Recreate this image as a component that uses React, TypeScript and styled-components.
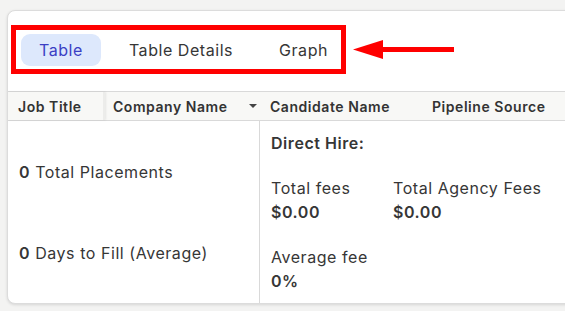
import React from 'react';
import styled, { createGlobalStyle } from 'styled-components';

const GlobalStyle = createGlobalStyle`
    html, body {
        margin: 0;
        padding: 0;
        background: #f3f3f2;
        overflow: hidden;
    }
    body {
        font-family: Inter, "Noto Sans", "Liberation Sans", sans-serif;
        color: #363636;
        letter-spacing: 0.55px;
    }
`;

const Page = styled.div`
    width: 565px;
    height: 311px;
    padding: 10px 0 0 7px;
    box-sizing: border-box;
    position: relative;
`;

const Card = styled.div`
    width: 620px;
    height: 294px;
    box-sizing: border-box;
    background: #ffffff;
    border: 1px solid #dcdcdc;
    border-radius: 8px;
    box-shadow: 0 1px 3px rgba(0, 0, 0, 0.12);
    display: flex;
    flex-direction: column;
    overflow: hidden;
`;

const TabBar = styled.div`
    padding: 14px 0 0 3px;
    height: 80px;
    box-sizing: border-box;
`;

const Highlight = styled.div`
    display: inline-flex;
    align-items: center;
    gap: 10px;
    border: 5px solid #ff0000;
    padding: 4px 0 3px 5px;
`;

const Tab = styled.div<{ $active?: boolean }>`
    height: 32px;
    padding: 0 18px;
    display: flex;
    align-items: center;
    border-radius: 9px;
    font-size: 16px;
    color: ${(p) => (p.$active ? '#3b3fc4' : '#363636')};
    background: ${(p) => (p.$active ? '#dde8fc' : 'transparent')};
    &:last-child {
        padding-right: 13px;
    }
`;

const Arrow = styled.svg`
    position: absolute;
    left: 352px;
    top: 39px;
`;

const HeaderRow = styled.div`
    display: flex;
    height: 30px;
    border-top: 1px solid #d9d9d9;
    border-bottom: 1px solid #d9d9d9;
    background: #f8f8f6;
    box-sizing: border-box;
`;

const HeadCell = styled.div<{ $width: number; $pad: number; $divider?: boolean }>`
    width: ${(p) => p.$width}px;
    padding-left: ${(p) => p.$pad}px;
    box-sizing: border-box;
    display: flex;
    align-items: center;
    font-size: 14px;
    font-weight: 600;
    color: #333333;
    ${(p) => p.$divider && 'border-right: 2px solid #ececea; box-shadow: 1px 0 2px rgba(0,0,0,0.08);'}
`;

const SortCaret = styled.span`
    margin-left: auto;
    margin-right: 3px;
    width: 0;
    height: 0;
    border-left: 4px solid transparent;
    border-right: 4px solid transparent;
    border-top: 4px solid #444444;
`;

const Body = styled.div`
    flex: 1;
    display: flex;
`;

const StatsColumn = styled.div`
    width: 252px;
    border-right: 1px solid #d9d9d9;
    padding: 39px 11px 0 11px;
    box-sizing: border-box;
    display: flex;
    flex-direction: column;
    gap: 57px;
`;

const Stat = styled.div`
    font-size: 16px;
    line-height: 24px;
    b {
        font-weight: 600;
    }
`;

const FeesColumn = styled.div`
    padding: 10px 11px;
    display: flex;
    flex-direction: column;
    gap: 21px;
`;

const SectionTitle = styled.div`
    font-size: 16px;
    line-height: 24px;
    font-weight: 600;
`;

const FeeRow = styled.div`
    display: flex;
    gap: 20px;
`;

const Fee = styled.div<{ $width?: number }>`
    width: ${(p) => (p.$width ? `${p.$width}px` : 'auto')};
    font-size: 16px;
    line-height: 24px;
`;

const FeeValue = styled.div`
    font-weight: 600;
`;

function App() {
    return (
        <Page>
            <GlobalStyle />
            <Card>
                <TabBar>
                    <Highlight>
                        <Tab $active>Table</Tab>
                        <Tab>Table Details</Tab>
                        <Tab>Graph</Tab>
                    </Highlight>
                </TabBar>
                <HeaderRow>
                    <HeadCell $width={97} $pad={10} $divider>Job Title</HeadCell>
                    <HeadCell $width={155} $pad={8}>
                        Company Name
                        <SortCaret />
                    </HeadCell>
                    <HeadCell $width={162} $pad={10}>Candidate Name</HeadCell>
                    <HeadCell $width={160} $pad={10}>Pipeline Source</HeadCell>
                </HeaderRow>
                <Body>
                    <StatsColumn>
                        <Stat><b>0</b> Total Placements</Stat>
                        <Stat><b>0</b> Days to Fill (Average)</Stat>
                    </StatsColumn>
                    <FeesColumn>
                        <SectionTitle>Direct Hire:</SectionTitle>
                        <FeeRow>
                            <Fee $width={102}>
                                Total fees
                                <FeeValue>$0.00</FeeValue>
                            </Fee>
                            <Fee>
                                Total Agency Fees
                                <FeeValue>$0.00</FeeValue>
                            </Fee>
                        </FeeRow>
                        <Fee>
                            Average fee
                            <FeeValue>0%</FeeValue>
                        </Fee>
                    </FeesColumn>
                </Body>
            </Card>
            <Arrow width="104" height="22" viewBox="0 0 104 22">
                <polygon points="1,10.5 31,1 31,20" fill="#ff0000" />
                <rect x="30" y="8" width="72" height="5" fill="#ff0000" />
            </Arrow>
        </Page>
    );
}

export default App;
